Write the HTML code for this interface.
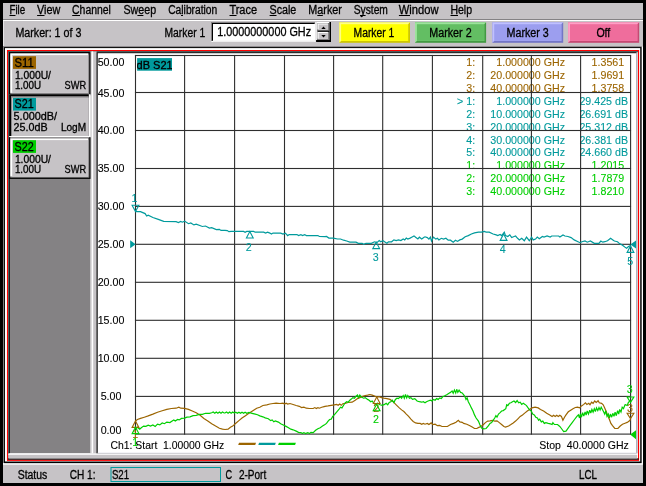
<!DOCTYPE html>
<html lang="en"><head><meta charset="utf-8"><title>Network Analyzer</title>
<style>
html,body{margin:0;padding:0;background:#000;overflow:hidden}
svg{display:block;will-change:transform;font-family:"Liberation Sans",Arial,sans-serif}
text{white-space:pre}
</style></head><body>
<svg width="646" height="486" viewBox="0 0 646 486">
<rect x="0" y="0" width="646" height="486" fill="#000"/>
<rect x="3" y="3" width="640" height="480" fill="#c6c3c6"/>
<rect x="3" y="19" width="640" height="1" fill="#848284"/>
<rect x="3" y="20" width="640" height="1" fill="#fff"/>
<rect x="3" y="21" width="1" height="25.2" fill="#e6e4e6"/>
<text x="9.4" y="13.9" font-size="12" fill="#000" stroke="#000" stroke-width="0.3" textLength="15.8" lengthAdjust="spacingAndGlyphs">File</text>
<rect x="9.5" y="15" width="6" height="1" fill="#000"/>
<text x="37" y="13.9" font-size="12" fill="#000" stroke="#000" stroke-width="0.3" textLength="23.3" lengthAdjust="spacingAndGlyphs">View</text>
<rect x="37.1" y="15" width="7.4" height="1" fill="#000"/>
<text x="72.1" y="13.9" font-size="12" fill="#000" stroke="#000" stroke-width="0.3" textLength="38.8" lengthAdjust="spacingAndGlyphs">Channel</text>
<rect x="72.2" y="15" width="7.8" height="1" fill="#000"/>
<text x="123.5" y="13.9" font-size="12" fill="#000" stroke="#000" stroke-width="0.3" textLength="32.6" lengthAdjust="spacingAndGlyphs">Sweep</text>
<rect x="137.4" y="15" width="6" height="1" fill="#000"/>
<text x="168.2" y="13.9" font-size="12" fill="#000" stroke="#000" stroke-width="0.3" textLength="49.1" lengthAdjust="spacingAndGlyphs">Calibration</text>
<rect x="181" y="15" width="2" height="1" fill="#000"/>
<text x="229.4" y="13.9" font-size="12" fill="#000" stroke="#000" stroke-width="0.3" textLength="27.7" lengthAdjust="spacingAndGlyphs">Trace</text>
<rect x="229.5" y="15" width="7" height="1" fill="#000"/>
<text x="269.5" y="13.9" font-size="12" fill="#000" stroke="#000" stroke-width="0.3" textLength="26.8" lengthAdjust="spacingAndGlyphs">Scale</text>
<rect x="269.6" y="15" width="6.9" height="1" fill="#000"/>
<text x="308.3" y="13.9" font-size="12" fill="#000" stroke="#000" stroke-width="0.3" textLength="33.6" lengthAdjust="spacingAndGlyphs">Marker</text>
<rect x="317.3" y="15" width="5.5" height="1" fill="#000"/>
<text x="353.7" y="13.9" font-size="12" fill="#000" stroke="#000" stroke-width="0.3" textLength="34.2" lengthAdjust="spacingAndGlyphs">System</text>
<rect x="360" y="15" width="5.6" height="1" fill="#000"/>
<text x="398.8" y="13.9" font-size="12" fill="#000" stroke="#000" stroke-width="0.3" textLength="39.8" lengthAdjust="spacingAndGlyphs">Window</text>
<rect x="398.9" y="15" width="11.1" height="1" fill="#000"/>
<text x="450.4" y="13.9" font-size="12" fill="#000" stroke="#000" stroke-width="0.3" textLength="21.6" lengthAdjust="spacingAndGlyphs">Help</text>
<rect x="450.5" y="15" width="7.5" height="1" fill="#000"/>
<text x="15.4" y="36.7" font-size="12" fill="#000" stroke="#000" stroke-width="0.3" textLength="66" lengthAdjust="spacingAndGlyphs">Marker: 1 of 3</text>
<text x="164.5" y="36.7" font-size="12" fill="#000" stroke="#000" stroke-width="0.3" textLength="40.7" lengthAdjust="spacingAndGlyphs">Marker 1</text>
<rect x="211" y="22" width="104.6" height="20" fill="#fff"/>
<rect x="211" y="22" width="104" height="1" fill="#848284"/>
<rect x="211" y="22" width="1" height="19.2" fill="#848284"/>
<rect x="212" y="23" width="102.7" height="1" fill="#000"/>
<rect x="212" y="23" width="1" height="17.8" fill="#000"/>
<rect x="213" y="40.6" width="101.7" height="0.7" fill="#c6c3c6"/>
<rect x="213" y="24" width="101.7" height="16.7" fill="#fff"/>
<text x="217.2" y="36.4" font-size="12" fill="#000" stroke="#000" stroke-width="0.3" textLength="93.9" lengthAdjust="spacingAndGlyphs">1.0000000000 GHz</text>
<rect x="316.1" y="22" width="14.9" height="20" fill="#000"/>
<rect x="316.1" y="22" width="13.3" height="18" fill="#fff"/>
<rect x="317.4" y="23.4" width="12" height="16.6" fill="#000"/>
<rect x="317.4" y="23.4" width="12" height="7.3" fill="#848284"/>
<rect x="317.4" y="23.4" width="10.5" height="6.1" fill="#fff"/>
<rect x="318.6" y="24.5" width="9.3" height="5" fill="#c6c3c6"/>
<rect x="317.4" y="31.9" width="12" height="8.1" fill="#848284"/>
<rect x="317.4" y="31.9" width="10.5" height="6.9" fill="#fff"/>
<rect x="318.6" y="33" width="9.3" height="5.8" fill="#c6c3c6"/>
<path d="M323.5 26.4 L325.7 28.9 L321.3 28.9 Z" fill="#000"/>
<path d="M321.3 34.9 L325.7 34.9 L323.5 37.4 Z" fill="#000"/>
<rect x="339.2" y="22.3" width="70.8" height="20.5" fill="#cec700"/>
<path d="M339.2 22.3 H410 L408.1 24.2 V40.9 H341.09999999999997 L339.2 42.8 Z" fill="#ffff84"/>
<rect x="341.1" y="24.2" width="67" height="16.7" fill="#ffff00"/>
<text x="353.6" y="36.9" font-size="12" fill="#000" stroke="#000" stroke-width="0.3" textLength="40.7" lengthAdjust="spacingAndGlyphs">Marker 1</text>
<rect x="415" y="22.3" width="71.1" height="20.5" fill="#429a42"/>
<path d="M415 22.3 H486.1 L484.20000000000005 24.2 V40.9 H416.9 L415 42.8 Z" fill="#9ce39c"/>
<rect x="416.9" y="24.2" width="67.3" height="16.7" fill="#63be63"/>
<text x="429.3" y="36.9" font-size="12" fill="#000" stroke="#000" stroke-width="0.3" textLength="42.3" lengthAdjust="spacingAndGlyphs">Marker 2</text>
<rect x="492.3" y="22.3" width="70.9" height="20.5" fill="#7375c6"/>
<path d="M492.3 22.3 H563.2 L561.3000000000001 24.2 V40.9 H494.2 L492.3 42.8 Z" fill="#c0c0ff"/>
<rect x="494.2" y="24.2" width="67.1" height="16.7" fill="#9c9eef"/>
<text x="506.5" y="36.9" font-size="12" fill="#000" stroke="#000" stroke-width="0.3" textLength="42.3" lengthAdjust="spacingAndGlyphs">Marker 3</text>
<rect x="568.1" y="22.3" width="71.1" height="20.5" fill="#c64973"/>
<path d="M568.1 22.3 H639.2 L637.3000000000001 24.2 V40.9 H570.0 L568.1 42.8 Z" fill="#ff9ec6"/>
<rect x="570" y="24.2" width="67.3" height="16.7" fill="#ef6d9c"/>
<text x="596.4" y="36.9" font-size="12" fill="#000" stroke="#000" stroke-width="0.3" textLength="13.9" lengthAdjust="spacingAndGlyphs">Off</text>
<rect x="3" y="46.2" width="639" height="1" fill="#848284"/>
<rect x="3" y="46.2" width="1" height="416.8" fill="#848284"/>
<rect x="641.7" y="46.6" width="1.3" height="417.4" fill="#fff"/>
<rect x="3" y="463.2" width="640" height="1.5" fill="#fff"/>
<rect x="3.95" y="47.1" width="637.65" height="416" fill="#000"/>
<rect x="4.95" y="48.1" width="635.25" height="413.4" fill="#fff"/>
<rect x="6.95" y="50" width="632.15" height="410.9" fill="#f00"/>
<rect x="8.1" y="51.2" width="629.9" height="408.4" fill="#fff"/>
<rect x="8.1" y="51.1" width="629.9" height="1.1" fill="#3a5050"/>
<rect x="8.1" y="51.2" width="1" height="408.2" fill="#3a5050"/>
<rect x="8.1" y="458.4" width="630.5" height="1.3" fill="#000"/>
<rect x="9.1" y="52.2" width="81.4" height="401.2" fill="#848284"/>
<rect x="9.1" y="52.2" width="0.8" height="401.2" fill="#000"/>
<rect x="8.2" y="453.4" width="629" height="1.6" fill="#fff"/>
<rect x="8.2" y="454.8" width="629" height="3.6" fill="#c6c3c6"/>
<rect x="90.4" y="51.4" width="6.2" height="402" fill="#c6c3c6"/>
<rect x="91.6" y="51.4" width="1.6" height="402" fill="#fff"/>
<rect x="96.5" y="52.2" width="540.7" height="401.1" fill="#000"/>
<rect x="97.7" y="53.2" width="538.6" height="400.1" fill="#fff"/>
<rect x="636.3" y="52.4" width="0.9" height="401.6" fill="#dcdcee"/>
<rect x="97.7" y="452.6" width="538.6" height="0.8" fill="#e4e4ee"/>
<rect x="9.1" y="52.2" width="81.4" height="43.1" fill="#000"/>
<rect x="10.3" y="52.2" width="79" height="1.2" fill="#000"/>
<rect x="10.3" y="53.4" width="79" height="40.7" fill="#848284"/>
<rect x="10.3" y="53.4" width="77.8" height="39.5" fill="#fff"/>
<rect x="12.2" y="55.1" width="75.9" height="37.8" fill="#c6c3c6"/>
<rect x="13" y="56.2" width="23" height="12.7" fill="#9c6500"/>
<text x="14.6" y="66.6" font-size="12" fill="#000" stroke="#000" stroke-width="0.3" textLength="19.2" lengthAdjust="spacingAndGlyphs">S11</text>
<text x="14.9" y="78.6" font-size="10.3" fill="#000" stroke="#000" stroke-width="0.3" textLength="36.1" lengthAdjust="spacingAndGlyphs">1.000U/</text>
<text x="14.9" y="89.3" font-size="10.3" fill="#000" stroke="#000" stroke-width="0.3" textLength="26.3" lengthAdjust="spacingAndGlyphs">1.00U</text>
<text x="64.6" y="89.3" font-size="10.3" fill="#000" stroke="#000" stroke-width="0.3" textLength="21.5" lengthAdjust="spacingAndGlyphs">SWR</text>
<rect x="9.1" y="94.2" width="81.4" height="43.2" fill="#fff"/>
<rect x="9.1" y="94.2" width="79.7" height="41.8" fill="#000"/>
<rect x="11" y="96.1" width="77.8" height="39.9" fill="#848284"/>
<rect x="11.9" y="97.5" width="76.9" height="38.5" fill="#c6c3c6"/>
<rect x="13" y="97.9" width="23" height="12.7" fill="#009a9c"/>
<text x="14.6" y="108.3" font-size="12" fill="#000" stroke="#000" stroke-width="0.3" textLength="19.2" lengthAdjust="spacingAndGlyphs">S21</text>
<text x="13.6" y="120.3" font-size="10.3" fill="#000" stroke="#000" stroke-width="0.3" textLength="43.4" lengthAdjust="spacingAndGlyphs">5.000dB/</text>
<text x="13.6" y="131" font-size="10.3" fill="#000" stroke="#000" stroke-width="0.3" textLength="34" lengthAdjust="spacingAndGlyphs">25.0dB</text>
<text x="60.9" y="131" font-size="10.3" fill="#000" stroke="#000" stroke-width="0.3" textLength="25.2" lengthAdjust="spacingAndGlyphs">LogM</text>
<rect x="9.1" y="137.2" width="81.4" height="41.7" fill="#000"/>
<rect x="10.3" y="137.2" width="79" height="1.2" fill="#b0aeb0"/>
<rect x="10.3" y="138.4" width="79" height="39.3" fill="#848284"/>
<rect x="10.3" y="138.4" width="77.8" height="38.1" fill="#fff"/>
<rect x="12.2" y="140.1" width="75.9" height="36.4" fill="#c6c3c6"/>
<rect x="13" y="140.2" width="23" height="12.7" fill="#00cf00"/>
<text x="14.6" y="150.6" font-size="12" fill="#000" stroke="#000" stroke-width="0.3" textLength="19.2" lengthAdjust="spacingAndGlyphs">S22</text>
<text x="14.9" y="162.6" font-size="10.3" fill="#000" stroke="#000" stroke-width="0.3" textLength="36.1" lengthAdjust="spacingAndGlyphs">1.000U/</text>
<text x="14.9" y="173.3" font-size="10.3" fill="#000" stroke="#000" stroke-width="0.3" textLength="26.3" lengthAdjust="spacingAndGlyphs">1.00U</text>
<text x="64.6" y="173.3" font-size="10.3" fill="#000" stroke="#000" stroke-width="0.3" textLength="21.5" lengthAdjust="spacingAndGlyphs">SWR</text>
<clipPath id="lc"><rect x="137.1" y="58.1" width="34.9" height="12.6"/></clipPath>
<rect x="137.1" y="58.1" width="34.9" height="12.6" fill="#009a9c"/>
<text x="136.6" y="68.8" font-size="11" fill="#000" stroke="#000" stroke-width="0.3" clip-path="url(#lc)">dB S21</text>
<text x="475.2" y="65.8" font-size="10.67" fill="#9c6500" stroke="#9c6500" stroke-width="0.1" text-anchor="end">1:</text>
<text x="565" y="65.8" font-size="10.67" fill="#9c6500" stroke="#9c6500" stroke-width="0.1" text-anchor="end">1.000000 GHz</text>
<text x="624.2" y="65.8" font-size="10.67" fill="#9c6500" stroke="#9c6500" stroke-width="0.1" text-anchor="end">1.3561</text>
<text x="475.2" y="78.75" font-size="10.67" fill="#9c6500" stroke="#9c6500" stroke-width="0.1" text-anchor="end">2:</text>
<text x="565" y="78.75" font-size="10.67" fill="#9c6500" stroke="#9c6500" stroke-width="0.1" text-anchor="end">20.000000 GHz</text>
<text x="624.2" y="78.75" font-size="10.67" fill="#9c6500" stroke="#9c6500" stroke-width="0.1" text-anchor="end">1.9691</text>
<text x="475.2" y="91.7" font-size="10.67" fill="#9c6500" stroke="#9c6500" stroke-width="0.1" text-anchor="end">3:</text>
<text x="565" y="91.7" font-size="10.67" fill="#9c6500" stroke="#9c6500" stroke-width="0.1" text-anchor="end">40.000000 GHz</text>
<text x="624.2" y="91.7" font-size="10.67" fill="#9c6500" stroke="#9c6500" stroke-width="0.1" text-anchor="end">1.3758</text>
<text x="475.2" y="104.65" font-size="10.67" fill="#009a9c" stroke="#009a9c" stroke-width="0.1" text-anchor="end">&gt; 1:</text>
<text x="565" y="104.65" font-size="10.67" fill="#009a9c" stroke="#009a9c" stroke-width="0.1" text-anchor="end">1.000000 GHz</text>
<text x="628" y="104.65" font-size="10.67" fill="#009a9c" stroke="#009a9c" stroke-width="0.1" text-anchor="end">29.425 dB</text>
<text x="475.2" y="117.6" font-size="10.67" fill="#009a9c" stroke="#009a9c" stroke-width="0.1" text-anchor="end">2:</text>
<text x="565" y="117.6" font-size="10.67" fill="#009a9c" stroke="#009a9c" stroke-width="0.1" text-anchor="end">10.000000 GHz</text>
<text x="628" y="117.6" font-size="10.67" fill="#009a9c" stroke="#009a9c" stroke-width="0.1" text-anchor="end">26.691 dB</text>
<text x="475.2" y="130.55" font-size="10.67" fill="#009a9c" stroke="#009a9c" stroke-width="0.1" text-anchor="end">3:</text>
<text x="565" y="130.55" font-size="10.67" fill="#009a9c" stroke="#009a9c" stroke-width="0.1" text-anchor="end">20.000000 GHz</text>
<text x="628" y="130.55" font-size="10.67" fill="#009a9c" stroke="#009a9c" stroke-width="0.1" text-anchor="end">25.312 dB</text>
<text x="475.2" y="143.5" font-size="10.67" fill="#009a9c" stroke="#009a9c" stroke-width="0.1" text-anchor="end">4:</text>
<text x="565" y="143.5" font-size="10.67" fill="#009a9c" stroke="#009a9c" stroke-width="0.1" text-anchor="end">30.000000 GHz</text>
<text x="628" y="143.5" font-size="10.67" fill="#009a9c" stroke="#009a9c" stroke-width="0.1" text-anchor="end">26.381 dB</text>
<text x="475.2" y="156.45" font-size="10.67" fill="#009a9c" stroke="#009a9c" stroke-width="0.1" text-anchor="end">5:</text>
<text x="565" y="156.45" font-size="10.67" fill="#009a9c" stroke="#009a9c" stroke-width="0.1" text-anchor="end">40.000000 GHz</text>
<text x="628" y="156.45" font-size="10.67" fill="#009a9c" stroke="#009a9c" stroke-width="0.1" text-anchor="end">24.660 dB</text>
<text x="475.2" y="169.4" font-size="10.67" fill="#00cf00" stroke="#00cf00" stroke-width="0.1" text-anchor="end">1:</text>
<text x="565" y="169.4" font-size="10.67" fill="#00cf00" stroke="#00cf00" stroke-width="0.1" text-anchor="end">1.000000 GHz</text>
<text x="624.2" y="169.4" font-size="10.67" fill="#00cf00" stroke="#00cf00" stroke-width="0.1" text-anchor="end">1.2015</text>
<text x="475.2" y="182.35" font-size="10.67" fill="#00cf00" stroke="#00cf00" stroke-width="0.1" text-anchor="end">2:</text>
<text x="565" y="182.35" font-size="10.67" fill="#00cf00" stroke="#00cf00" stroke-width="0.1" text-anchor="end">20.000000 GHz</text>
<text x="624.2" y="182.35" font-size="10.67" fill="#00cf00" stroke="#00cf00" stroke-width="0.1" text-anchor="end">1.7879</text>
<text x="475.2" y="195.3" font-size="10.67" fill="#00cf00" stroke="#00cf00" stroke-width="0.1" text-anchor="end">3:</text>
<text x="565" y="195.3" font-size="10.67" fill="#00cf00" stroke="#00cf00" stroke-width="0.1" text-anchor="end">40.000000 GHz</text>
<text x="624.2" y="195.3" font-size="10.67" fill="#00cf00" stroke="#00cf00" stroke-width="0.1" text-anchor="end">1.8210</text>
<clipPath id="pc"><rect x="97.7" y="53.2" width="538.6" height="400"/></clipPath>
<text x="111" y="65.8" font-size="10.67" fill="#000" stroke="#000" stroke-width="0.1" text-anchor="middle" clip-path="url(#pc)">50.00</text>
<text x="111" y="96.6" font-size="10.67" fill="#000" stroke="#000" stroke-width="0.1" text-anchor="middle" clip-path="url(#pc)">45.00</text>
<text x="111" y="134.49" font-size="10.67" fill="#000" stroke="#000" stroke-width="0.1" text-anchor="middle" clip-path="url(#pc)">40.00</text>
<text x="111" y="172.38" font-size="10.67" fill="#000" stroke="#000" stroke-width="0.1" text-anchor="middle" clip-path="url(#pc)">35.00</text>
<text x="111" y="210.27" font-size="10.67" fill="#000" stroke="#000" stroke-width="0.1" text-anchor="middle" clip-path="url(#pc)">30.00</text>
<text x="111" y="248.16" font-size="10.67" fill="#000" stroke="#000" stroke-width="0.1" text-anchor="middle" clip-path="url(#pc)">25.00</text>
<text x="111" y="286.05" font-size="10.67" fill="#000" stroke="#000" stroke-width="0.1" text-anchor="middle" clip-path="url(#pc)">20.00</text>
<text x="111" y="323.94" font-size="10.67" fill="#000" stroke="#000" stroke-width="0.1" text-anchor="middle" clip-path="url(#pc)">15.00</text>
<text x="111" y="361.83" font-size="10.67" fill="#000" stroke="#000" stroke-width="0.1" text-anchor="middle" clip-path="url(#pc)">10.00</text>
<text x="111" y="399.72" font-size="10.67" fill="#000" stroke="#000" stroke-width="0.1" text-anchor="middle" clip-path="url(#pc)">5.00</text>
<text x="111" y="433.7" font-size="10.67" fill="#000" stroke="#000" stroke-width="0.1" text-anchor="middle" clip-path="url(#pc)">0.00</text>
<text x="110.5" y="448.9" font-size="10.67" fill="#000" stroke="#000" stroke-width="0.1" textLength="113.8" lengthAdjust="spacingAndGlyphs">Ch1: Start  1.00000 GHz</text>
<text x="539.3" y="449.1" font-size="10.67" fill="#000" stroke="#000" stroke-width="0.1" textLength="89.5" lengthAdjust="spacingAndGlyphs">Stop  40.0000 GHz</text>
<path d="M239.0 442.8 H256 L255.2 445 H238.2 Z" fill="#9c6500"/>
<path d="M259.1 442.8 H275.8 L275.0 445 H258.3 Z" fill="#009a9c"/>
<path d="M278.90000000000003 442.8 H295.9 L295.09999999999997 445 H278.1 Z" fill="#00cf00"/>
<rect x="134.95" y="54.95" width="1.1" height="379.7" fill="#2e2e2e"/>
<rect x="184.05" y="54.95" width="1.1" height="379.7" fill="#2e2e2e"/>
<rect x="234.05" y="54.95" width="1.1" height="379.7" fill="#2e2e2e"/>
<rect x="283.95" y="54.95" width="1.1" height="379.7" fill="#2e2e2e"/>
<rect x="333.05" y="54.95" width="1.1" height="379.7" fill="#2e2e2e"/>
<rect x="382.15" y="54.95" width="1.1" height="379.7" fill="#2e2e2e"/>
<rect x="431.85" y="54.95" width="1.1" height="379.7" fill="#2e2e2e"/>
<rect x="482.15" y="54.95" width="1.1" height="379.7" fill="#2e2e2e"/>
<rect x="530.85" y="54.95" width="1.1" height="379.7" fill="#2e2e2e"/>
<rect x="580.05" y="54.95" width="1.1" height="379.7" fill="#2e2e2e"/>
<rect x="630.05" y="54.95" width="1.1" height="379.7" fill="#2e2e2e"/>
<rect x="134.95" y="54.95" width="496.1" height="1.1" fill="#2e2e2e"/>
<rect x="134.95" y="91.95" width="496.1" height="1.1" fill="#2e2e2e"/>
<rect x="134.95" y="129.95" width="496.1" height="1.1" fill="#2e2e2e"/>
<rect x="134.95" y="167.95" width="496.1" height="1.1" fill="#2e2e2e"/>
<rect x="134.95" y="205.85" width="496.1" height="1.1" fill="#2e2e2e"/>
<rect x="134.95" y="243.75" width="496.1" height="1.1" fill="#2e2e2e"/>
<rect x="134.95" y="281.75" width="496.1" height="1.1" fill="#2e2e2e"/>
<rect x="134.95" y="319.75" width="496.1" height="1.1" fill="#2e2e2e"/>
<rect x="134.95" y="357.75" width="496.1" height="1.1" fill="#2e2e2e"/>
<rect x="134.95" y="395.85" width="496.1" height="1.1" fill="#2e2e2e"/>
<rect x="134.95" y="433.55" width="496.1" height="1.1" fill="#2e2e2e"/>
<polyline points="135.5,421.0 137.4,419.5 140.5,418.4 144.3,417.2 148.2,415.9 152.9,414.1 157.5,412.2 162.2,410.7 166.8,409.4 171.4,408.5 176.1,408.2 178.9,407.2 180.7,408.2 184.6,408.3 188.5,409.4 192.3,411.0 196.2,412.8 200.1,415.3 203.9,418.4 207.8,421.0 211.7,423.7 215.6,426.1 219.4,428.3 222.5,429.2 225.0,429.5 228.1,429.2 230.4,427.2 232.7,426.1 235.8,423.3 238.9,420.6 242.0,418.1 245.1,415.9 248.2,413.7 251.3,411.7 254.4,409.7 256.7,408.2 259.8,407.2 262.9,405.5 266.8,404.8 269.9,404.0 273.0,403.5 276.1,403.2 280.0,403.5 283.0,403.2 284.6,404.0 286.1,403.2 287.7,404.1 290.0,403.5 293.1,404.5 296.2,405.5 299.3,406.3 301.6,407.6 303.9,407.2 306.3,408.2 309.4,408.5 313.2,408.5 314.8,407.6 316.3,408.5 317.9,407.6 319.4,408.2 321.7,407.2 324.1,406.6 325.0,406.4 328.1,405.9 331.2,405.3 334.3,404.8 336.6,404.4 338.2,405.3 339.7,404.1 341.3,405.3 342.8,403.7 345.1,403.3 348.2,402.5 352.1,402.2 355.2,400.2 357.5,398.6 359.8,397.6 362.9,396.3 365.2,395.5 367.6,395.1 369.9,394.5 372.2,395.1 374.5,396.0 376.9,397.1 379.2,396.6 381.5,397.6 383.8,398.2 386.9,398.6 390.0,399.4 393.1,401.7 396.2,404.8 399.3,407.9 401.6,409.9 403.9,411.5 406.3,414.1 408.6,416.4 410.9,419.2 413.2,421.4 415.6,422.9 417.9,423.4 420.2,423.4 421.7,424.2 423.3,423.4 425.0,424.2 427.3,423.4 428.9,424.5 431.2,422.9 432.7,424.5 435.1,424.2 437.4,425.7 439.7,425.4 442.0,426.5 447.4,426.5 450.5,424.5 453.6,423.4 456.0,422.3 458.3,420.3 459.8,421.9 462.2,422.3 463.7,423.4 466.8,424.2 469.9,425.7 472.2,427.0 474.5,428.5 476.9,428.5 478.4,427.6 480.7,426.5 483.0,425.0 485.4,422.6 487.7,421.1 490.0,420.8 492.3,420.3 494.7,421.1 497.0,420.8 499.3,422.6 501.6,424.5 503.9,426.5 505.5,427.0 508.6,426.0 510.9,424.5 513.2,422.9 515.6,421.1 517.9,418.8 520.2,416.4 522.5,414.9 525.0,412.9 527.3,411.0 529.6,409.5 532.0,407.9 535.1,407.2 538.2,407.9 540.5,409.5 543.6,411.0 546.7,413.3 549.8,414.9 552.1,416.4 553.6,415.2 555.2,416.4 556.7,415.2 558.3,416.4 559.8,415.2 561.4,416.4 562.9,420.3 564.5,417.2 566.0,414.9 568.3,411.8 570.7,410.2 573.0,408.7 575.3,407.5 577.6,407.2 579.5,407.9 581.5,405.9 583.8,404.4 585.4,402.8 586.9,404.4 588.8,403.3 590.0,404.8 591.6,402.2 593.1,403.3 594.7,401.0 596.2,402.5 598.1,400.7 599.3,402.8 601.6,403.3 603.2,404.8 604.7,407.9 606.3,411.8 607.8,415.7 609.4,419.5 610.9,423.4 612.5,425.7 614.8,428.5 617.9,428.5 620.2,426.0 622.5,424.2 625.0,423.2 627.2,422.4 629.2,421.1 630.5,419.5" fill="none" stroke="#9c6500" stroke-width="1.2" stroke-linejoin="miter" stroke-miterlimit="3"/>
<polyline points="135.5,210.6 136.6,211.6 140.5,211.6 145.1,213.6 146.7,216.0 148.2,215.2 152.9,217.5 158.3,219.4 163.7,221.4 176.1,221.7 178.4,222.5 180.7,221.4 182.3,222.2 184.6,221.1 188.5,223.7 190.8,222.9 193.9,224.9 196.2,224.2 202.4,226.5 205.5,226.0 209.4,228.0 211.7,227.6 216.3,229.6 219.4,229.3 221.0,230.4 225.0,230.4 227.3,230.6 228.9,231.7 231.2,231.4 243.6,231.4 245.1,232.2 246.7,231.4 253.6,231.4 255.2,232.2 263.7,232.2 265.6,233.1 267.6,232.2 269.9,233.1 271.4,234.0 273.0,233.1 280.7,233.1 283.0,234.0 285.4,233.1 287.7,235.6 289.2,234.6 297.0,234.6 298.5,235.6 300.9,234.6 302.4,235.6 304.7,234.6 306.3,235.6 317.9,235.6 319.4,236.5 325.0,236.6 326.5,236.4 328.9,238.1 333.5,238.1 337.4,239.0 340.5,239.0 343.6,240.2 346.7,241.0 349.8,242.1 356.0,242.1 358.3,243.3 362.2,243.3 363.7,244.4 366.0,243.3 371.4,243.3 374.5,241.8 376.9,242.6 379.2,240.6 380.7,241.8 383.0,240.6 384.6,241.8 386.9,243.3 388.5,241.8 391.6,241.8 393.9,239.9 396.2,240.6 398.5,239.9 400.9,240.6 403.2,239.0 404.7,239.9 406.3,238.1 407.8,239.0 410.1,238.1 411.7,237.2 414.0,235.9 415.6,237.2 417.9,239.0 419.4,237.2 421.7,239.0 424.1,237.2 425.0,236.8 427.3,237.6 428.9,239.1 430.4,237.1 431.5,241.1 433.5,237.1 435.8,239.1 437.4,238.3 438.9,239.9 441.3,238.3 443.6,239.1 445.9,238.3 448.2,240.2 450.5,240.2 453.2,242.2 455.5,240.2 457.5,241.4 459.8,239.9 462.2,239.1 465.2,236.8 468.3,235.6 471.4,234.0 474.5,232.9 478.4,232.2 481.5,232.2 484.6,231.4 486.1,232.2 489.2,232.2 493.1,234.0 496.2,234.9 497.8,235.6 500.1,234.5 501.6,235.6 504.3,232.2 505.5,235.6 507.8,236.5 509.8,234.9 511.7,237.6 513.5,236.8 515.6,236.0 517.6,238.3 519.4,239.9 521.7,238.3 524.3,240.7 526.5,237.1 529.3,240.7 531.6,237.1 533.2,239.9 535.5,239.1 537.3,237.1 539.3,238.7 542.4,236.5 544.0,237.1 547.1,236.0 550.2,237.1 551.7,236.0 558.7,236.0 559.9,237.1 563.0,234.9 564.9,236.0 568.0,236.5 571.1,237.6 574.2,239.9 578.0,241.7 580.1,242.7 581.9,241.7 585.0,241.0 587.3,242.2 590.4,241.0 594.3,243.3 598.9,243.3 600.8,241.0 602.8,242.2 604.8,241.7 607.5,240.7 610.6,238.3 612.9,239.9 614.4,241.0 617.5,241.7 619.5,243.6 621.5,244.6 623.5,246.0 625.5,247.6 626.6,248.2 628.5,246.5 630.5,245.6" fill="none" stroke="#009a9c" stroke-width="1.2" stroke-linejoin="miter" stroke-miterlimit="3"/>
<polyline points="135.5,429.2 137.4,427.2 139.7,429.2 141.3,427.7 143.6,426.1 145.9,426.4 148.2,425.2 150.5,426.1 152.9,424.9 155.2,426.4 157.5,424.1 159.8,424.9 162.2,423.0 164.5,423.7 166.8,422.1 169.9,422.6 171.4,421.5 173.8,419.9 175.3,421.0 177.6,419.5 179.2,419.9 181.5,418.4 184.6,418.1 186.9,417.2 190.0,416.8 193.1,415.6 196.2,415.3 199.3,414.4 202.4,414.4 205.5,413.3 209.4,413.3 211.7,412.8 213.2,412.0 214.8,413.3 216.3,412.0 217.9,413.3 219.4,412.0 221.0,413.3 222.5,412.0 224.1,413.0 225.0,413.0 226.5,412.0 228.1,413.3 229.6,412.0 231.2,413.3 232.7,412.0 234.3,413.0 235.8,412.2 237.4,413.3 238.9,412.2 240.5,413.3 242.0,412.2 243.6,413.3 245.1,412.2 246.7,413.3 249.0,412.5 252.1,413.3 255.2,414.1 257.5,414.8 259.8,415.9 262.9,416.8 265.2,417.9 268.3,418.7 270.7,420.6 272.2,419.9 273.8,421.8 275.3,421.0 278.4,422.1 280.7,423.7 283.8,425.2 286.1,426.4 288.5,427.7 290.8,429.2 293.1,429.8 296.2,431.1 298.5,432.3 300.9,432.6 302.4,433.6 303.9,432.6 305.5,433.6 307.8,432.6 309.4,433.6 310.9,432.3 313.2,432.6 315.6,430.3 317.9,428.8 320.2,427.7 322.5,426.1 325.0,424.5 326.5,423.4 328.1,421.1 329.6,419.5 331.2,419.2 332.7,416.4 334.3,414.9 336.6,412.1 338.9,409.5 340.5,407.2 342.0,407.9 343.6,405.3 345.1,402.8 346.7,401.7 348.2,402.2 349.8,400.2 351.3,399.1 352.9,397.6 354.4,398.2 356.0,396.3 357.5,395.1 358.3,397.6 359.8,395.1 361.4,397.1 363.7,398.2 365.2,397.6 367.6,399.4 369.1,400.2 370.7,401.7 372.2,401.0 373.8,403.3 375.3,404.4 377.6,403.3 380.0,404.8 382.3,405.3 384.6,404.4 386.1,403.3 387.7,404.8 389.2,402.5 390.8,401.7 392.3,400.2 393.9,402.5 395.4,399.4 397.0,398.2 398.5,398.6 400.1,396.6 401.6,398.2 403.2,395.5 404.3,398.2 405.5,394.5 406.7,397.9 407.8,395.5 409.4,398.2 410.9,397.6 412.5,399.4 414.8,398.6 417.1,401.0 419.4,401.7 421.7,402.2 423.3,401.7 425.0,402.8 426.5,401.7 428.1,401.0 430.4,400.2 432.0,401.0 433.5,399.4 435.1,400.2 436.6,398.6 438.2,399.4 439.7,397.9 441.3,398.6 442.8,396.6 444.3,396.0 446.7,394.8 449.0,393.2 450.5,392.4 452.1,390.9 453.2,393.2 454.4,390.1 455.7,392.9 456.7,389.3 457.8,392.4 459.1,390.1 460.6,392.4 462.2,392.9 463.7,394.8 464.9,396.6 466.0,399.4 467.1,397.9 468.3,401.7 469.9,404.8 471.4,407.9 473.0,411.0 474.5,414.9 476.1,418.0 478.4,421.1 480.0,425.0 481.5,428.0 483.8,428.8 486.1,428.5 488.5,425.7 490.0,423.4 491.6,422.6 493.1,420.3 494.7,418.0 495.9,415.7 497.0,417.2 498.5,414.1 500.1,412.6 501.6,411.0 503.2,410.6 504.7,409.5 505.8,408.7 506.7,404.8 507.8,405.6 509.4,403.3 510.9,402.8 512.5,401.7 514.0,401.0 515.6,402.5 517.1,400.6 518.7,402.8 520.2,402.2 521.7,404.4 523.3,403.3 525.0,404.4 526.5,405.6 528.1,407.9 529.6,409.9 531.2,411.0 532.7,414.1 534.3,414.9 535.8,417.2 537.4,418.0 538.6,420.3 539.7,419.2 541.3,421.9 542.8,421.1 544.3,423.4 545.9,422.6 548.2,423.4 550.5,423.9 552.1,424.5 552.9,422.6 554.4,424.5 557.5,424.5 559.8,426.5 561.4,428.5 563.7,431.6 566.0,431.1 567.6,428.8 569.9,425.7 572.2,422.6 574.5,419.5 576.9,416.4 578.4,414.9 579.5,418.0 580.4,413.7 581.5,417.2 582.6,412.6 583.8,416.1 585.1,411.8 586.1,415.2 587.2,411.0 588.5,414.1 589.7,410.2 590.8,413.0 591.9,409.5 593.1,412.1 594.3,408.7 595.4,411.5 596.5,407.9 597.8,410.6 599.0,407.5 600.1,409.9 601.2,407.2 602.4,409.5 603.6,411.8 604.7,414.1 605.8,411.0 607.0,416.4 608.3,414.1 609.4,418.0 610.4,414.1 611.7,417.2 612.8,413.3 614.0,416.4 615.1,412.1 616.3,415.7 617.6,410.6 618.7,414.1 619.7,409.5 621.0,412.1 622.2,407.2 623.5,408.7 625.0,404.8 625.5,404.7 627.2,405.5 628.5,402.2 629.7,401.4 630.5,400.5" fill="none" stroke="#00cf00" stroke-width="1.2" stroke-linejoin="miter" stroke-miterlimit="3"/>
<path d="M135.5 421 L138.9 427.4 H132.1 Z" fill="none" stroke="#9c6500" stroke-width="1.1"/>
<text x="135.2" y="437.5" font-size="10.67" fill="#9c6500" stroke="#9c6500" stroke-width="0.1" text-anchor="middle">1</text>
<path d="M376.7 397.1 L380.09999999999997 403.5 H373.3 Z" fill="none" stroke="#9c6500" stroke-width="1.1"/>
<text x="376.2" y="411.5" font-size="10.67" fill="#9c6500" stroke="#9c6500" stroke-width="0.1" text-anchor="middle">2</text>
<path d="M630.5 418.6 L633.9 413.20000000000005 H627.1 Z" fill="none" stroke="#9c6500" stroke-width="1.1"/>
<text x="630" y="412.3" font-size="10.67" fill="#9c6500" stroke="#9c6500" stroke-width="0.1" text-anchor="middle">3</text>
<path d="M135.5 211.5 L138.9 205.3 H132.1 Z" fill="none" stroke="#009a9c" stroke-width="1.1"/>
<text x="134.4" y="201.9" font-size="10.67" fill="#009a9c" stroke="#009a9c" stroke-width="0.1" text-anchor="middle">1</text>
<path d="M249.8 231.6 L253.20000000000002 238.0 H246.4 Z" fill="none" stroke="#009a9c" stroke-width="1.1"/>
<text x="248.6" y="250.8" font-size="10.67" fill="#009a9c" stroke="#009a9c" stroke-width="0.1" text-anchor="middle">2</text>
<path d="M376.2 242.2 L379.59999999999997 248.6 H372.8 Z" fill="none" stroke="#009a9c" stroke-width="1.1"/>
<text x="375.6" y="260.8" font-size="10.67" fill="#009a9c" stroke="#009a9c" stroke-width="0.1" text-anchor="middle">3</text>
<path d="M503.6 234 L507.0 240.4 H500.20000000000005 Z" fill="none" stroke="#009a9c" stroke-width="1.1"/>
<text x="502.8" y="252.7" font-size="10.67" fill="#009a9c" stroke="#009a9c" stroke-width="0.1" text-anchor="middle">4</text>
<path d="M630.5 246 L633.9 252.4 H627.1 Z" fill="none" stroke="#009a9c" stroke-width="1.1"/>
<text x="630.3" y="265.3" font-size="10.67" fill="#009a9c" stroke="#009a9c" stroke-width="0.1" text-anchor="middle">5</text>
<path d="M135.5 427.2 L138.9 433.59999999999997 H132.1 Z" fill="none" stroke="#00cf00" stroke-width="1.1"/>
<text x="135.2" y="446" font-size="10.67" fill="#00cf00" stroke="#00cf00" stroke-width="0.1" text-anchor="middle">1</text>
<path d="M376.6 404.3 L380.0 410.7 H373.20000000000005 Z" fill="none" stroke="#00cf00" stroke-width="1.1"/>
<text x="376" y="422.7" font-size="10.67" fill="#00cf00" stroke="#00cf00" stroke-width="0.1" text-anchor="middle">2</text>
<path d="M630.5 402.4 L633.9 397.0 H627.1 Z" fill="none" stroke="#00cf00" stroke-width="1.1"/>
<text x="629.6" y="393" font-size="10.67" fill="#00cf00" stroke="#00cf00" stroke-width="0.1" text-anchor="middle">3</text>
<path d="M130.2 240.3 L135.6 244.3 L130.2 248.3 Z" fill="#009a9c"/>
<path d="M636 240.4 L630.4 244.4 L636 248.6 Z" fill="#009a9c"/>
<path d="M636 430.2 L630.2 434.6 L636 439.2 Z" fill="#00cf00"/>
<text x="17.7" y="478.8" font-size="12" fill="#000" stroke="#000" stroke-width="0.3" textLength="29.6" lengthAdjust="spacingAndGlyphs">Status</text>
<text x="69.7" y="478.8" font-size="12" fill="#000" stroke="#000" stroke-width="0.3" textLength="25.8" lengthAdjust="spacingAndGlyphs">CH 1:</text>
<rect x="111" y="467.5" width="109.5" height="14" fill="none" stroke="#009a9c" stroke-width="1"/>
<text x="111.9" y="478.8" font-size="12" fill="#000" stroke="#000" stroke-width="0.3" textLength="17.2" lengthAdjust="spacingAndGlyphs">S21</text>
<text x="225.5" y="478.8" font-size="12" fill="#000" stroke="#000" stroke-width="0.3" textLength="6.6" lengthAdjust="spacingAndGlyphs">C</text>
<text x="238.9" y="478.8" font-size="12" fill="#000" stroke="#000" stroke-width="0.3" textLength="27.3" lengthAdjust="spacingAndGlyphs">2-Port</text>
<text x="579" y="478.8" font-size="12" fill="#000" stroke="#000" stroke-width="0.3" textLength="17.9" lengthAdjust="spacingAndGlyphs">LCL</text>
</svg>
</body></html>
